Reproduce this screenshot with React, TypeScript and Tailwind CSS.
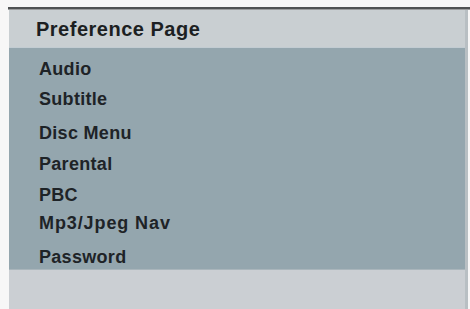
const items = [
  { label: 'Audio', gap: 'mt-0', track: 'tracking-[0.3px]' },
  { label: 'Subtitle', gap: 'mt-[2px]', track: 'tracking-[0.3px]' },
  { label: 'Disc Menu', gap: 'mt-[6px]', track: 'tracking-[0.3px]' },
  { label: 'Parental', gap: 'mt-[3px]', track: 'tracking-[0.3px]' },
  { label: 'PBC', gap: 'mt-[3px]', track: 'tracking-[0.3px]' },
  { label: 'Mp3/Jpeg Nav', gap: 'mt-0', track: 'tracking-[0.9px]' },
  { label: 'Password', gap: 'mt-[6px]', track: 'tracking-[0.3px]' },
];

const App = () => {
  return (
    <div className="w-[470px] h-[309px] bg-[#f7f7f7] pt-[7px] pl-[9px] overflow-hidden" style={{ fontFamily: '"Liberation Sans", Arial, sans-serif' }}>
      <div className="h-[3px] -ml-[1px] bg-[#4f5253] border-b border-[#9a9c9d]" />
      <div className="flex flex-col w-[459px] border-r-[3px] border-[#b8bfc3]">
        <div className="h-[38px] bg-[#c9cfd2] flex items-center pl-[27px] border-b border-[#c2ccd2]">
          <span className="text-[20px] font-bold text-[#1c1f22] tracking-[0.5px]">Preference Page</span>
        </div>
        <div className="h-[221px] bg-[#94a6ae] pt-[7px] pl-[30px]">
          {items.map((it) => (
            <div key={it.label} className={`${it.gap} h-[28px] flex items-center`}>
              <span className={`text-[18px] font-bold text-[#1e2327] ${it.track}`}>{it.label}</span>
            </div>
          ))}
        </div>
        <div className="h-[40px] bg-[#cbcfd3] border-t border-[#a9b5bb]" />
      </div>
    </div>
  );
};

export default App;
